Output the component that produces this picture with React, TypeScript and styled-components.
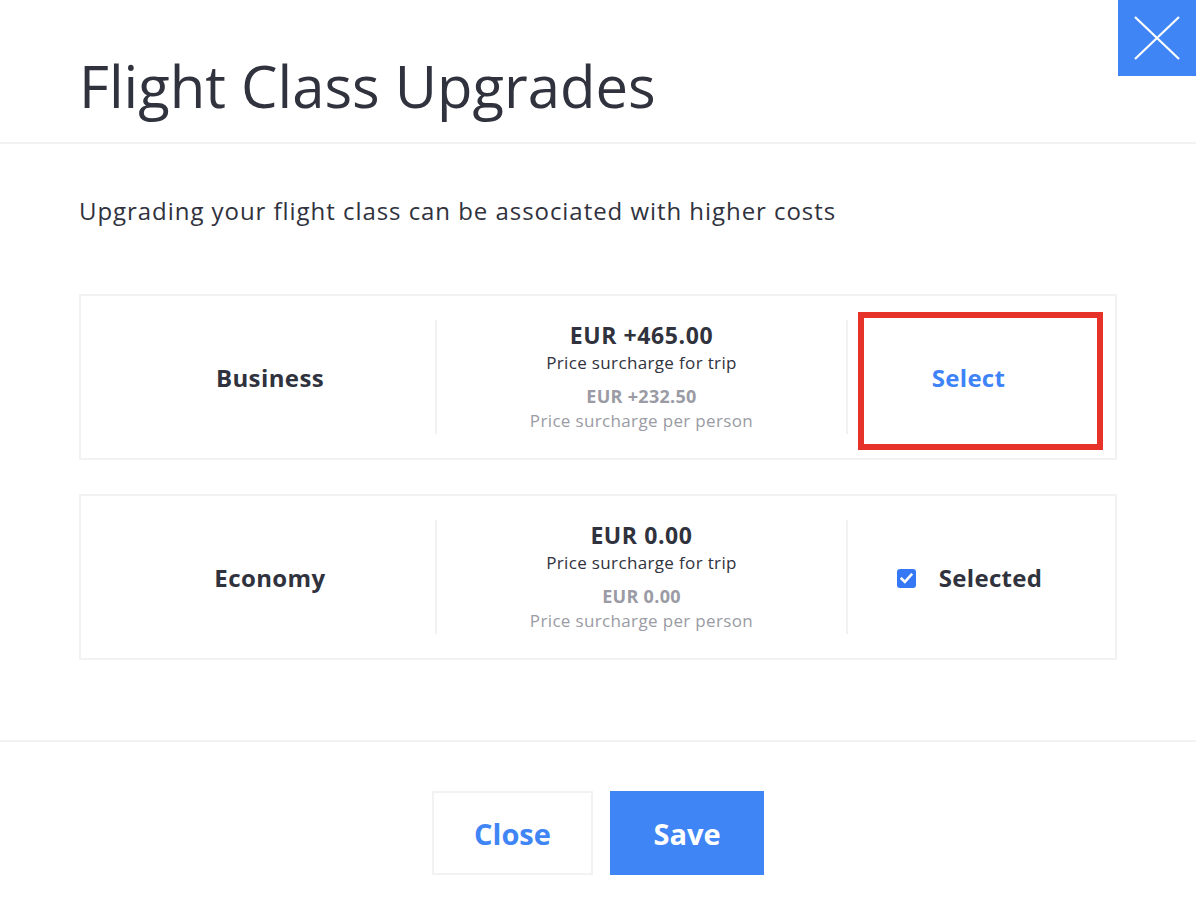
import React from "react";
import styled, { createGlobalStyle } from "styled-components";

const GlobalStyle = createGlobalStyle`
  html, body { margin: 0; padding: 0; background: #ffffff; }
  body { font-family: "Open Sans", "Noto Sans", sans-serif; color: #30323d; }
  * { box-sizing: border-box; }
`;

const Modal = styled.div`
  position: relative;
  width: 1196px;
  height: 920px;
  background: #fff;
  display: flex;
  flex-direction: column;
`;

const Header = styled.header`
  height: 144px;
  border-bottom: 2px solid #f2f2f3;
  padding: 48px 0 0 79px;
`;

const Title = styled.h1`
  margin: 0;
  font-size: 58px;
  font-weight: 400;
  line-height: 76px;
  color: #30323d;
`;

const CloseX = styled.button`
  position: absolute;
  top: 0;
  right: 0;
  width: 78px;
  height: 76px;
  border: none;
  padding: 0;
  background: #4085f6;
  display: flex;
  align-items: center;
  justify-content: center;
  cursor: pointer;
`;

const Body = styled.main`
  padding: 51px 79px 0 79px;
  height: 598px;
  border-bottom: 2px solid #f2f2f3;
`;

const Subtitle = styled.p`
  margin: 0 0 67px 0;
  font-size: 24px;
  line-height: 32px;
  letter-spacing: 0.95px;
  color: #30323d;
`;

const Options = styled.div`
  display: flex;
  flex-direction: column;
  gap: 34px;
`;

const Card = styled.div`
  height: 166px;
  border: 2px solid #f2f2f3;
  padding: 24px;
  display: grid;
  grid-template-columns: 330px 411px 1fr;
`;

const Cell = styled.div<{ $divider?: boolean }>`
  display: flex;
  flex-direction: column;
  align-items: center;
  justify-content: center;
  ${(p) => (p.$divider ? "border-left: 2px solid #f2f2f3;" : "")}
`;

const ClassName = styled.div`
  font-size: 24px;
  font-weight: 700;
  letter-spacing: 0.4px;
  color: #30323d;
`;

const Price = styled.div<{ $muted?: boolean }>`
  font-size: ${(p) => (p.$muted ? "18px" : "23px")};
  font-weight: 700;
  line-height: ${(p) => (p.$muted ? "24px" : "28px")};
  letter-spacing: ${(p) => (p.$muted ? "0.3px" : "0.6px")};
  color: ${(p) => (p.$muted ? "#9a9ba4" : "#30323d")};
  margin-top: ${(p) => (p.$muted ? "7px" : "0")};
`;

const PriceNote = styled.div<{ $muted?: boolean }>`
  font-size: 17px;
  line-height: ${(p) => (p.$muted ? "26px" : "28px")};
  letter-spacing: 0.35px;
  color: ${(p) => (p.$muted ? "#9a9ba4" : "#30323d")};
`;

const SelectButton = styled.button`
  flex: 1;
  align-self: stretch;
  margin: -8px -12px -16px 10px;
  border: 6px solid #e63228;
  background: #fff;
  padding: 0 24px 7px 0;
  font-family: inherit;
  font-size: 24px;
  font-weight: 700;
  letter-spacing: 0.3px;
  color: #3f83f8;
  cursor: pointer;
`;

const SelectedLabel = styled.label`
  display: flex;
  align-items: center;
  gap: 23px;
  font-size: 24px;
  font-weight: 700;
  letter-spacing: 0.3px;
  color: #30323d;
`;

const CheckBox = styled.span`
  flex: none;
  width: 19px;
  height: 19px;
  border-radius: 3px;
  background: #3478f6;
  display: inline-flex;
  align-items: center;
  justify-content: center;
  margin-top: 2px;
`;

const Footer = styled.footer`
  flex: 1;
  display: flex;
  justify-content: center;
  align-items: flex-start;
  padding-top: 49px;
  gap: 17px;
`;

const FooterButton = styled.button<{ $primary?: boolean }>`
  height: 84px;
  width: ${(p) => (p.$primary ? "154px" : "161px")};
  border: ${(p) => (p.$primary ? "none" : "2px solid #f2f2f3")};
  background: ${(p) => (p.$primary ? "#4085f6" : "#ffffff")};
  color: ${(p) => (p.$primary ? "#ffffff" : "#4085f6")};
  font-family: inherit;
  font-size: 29px;
  font-weight: 700;
  cursor: pointer;
`;

type Option = {
  name: string;
  trip: string;
  person: string;
  selected: boolean;
};

const options: Option[] = [
  { name: "Business", trip: "EUR +465.00", person: "EUR +232.50", selected: false },
  { name: "Economy", trip: "EUR 0.00", person: "EUR 0.00", selected: true },
];

export default function App() {
  return (
    <>
      <GlobalStyle />
      <Modal>
        <Header>
          <Title>Flight Class Upgrades</Title>
        </Header>
        <CloseX aria-label="Close">
          <svg width="48" height="44" viewBox="0 0 48 44">
            <path d="M2 1 L46 43 M46 1 L2 43" stroke="#fff" strokeWidth="2.2" fill="none" />
          </svg>
        </CloseX>
        <Body>
          <Subtitle>Upgrading your flight class can be associated with higher costs</Subtitle>
          <Options>
            {options.map((o) => (
              <Card key={o.name}>
                <Cell>
                  <ClassName>{o.name}</ClassName>
                </Cell>
                <Cell $divider>
                  <Price>{o.trip}</Price>
                  <PriceNote>Price surcharge for trip</PriceNote>
                  <Price $muted>{o.person}</Price>
                  <PriceNote $muted>Price surcharge per person</PriceNote>
                </Cell>
                <Cell $divider>
                  {o.selected ? (
                    <SelectedLabel>
                      <CheckBox>
                        <svg width="13" height="11" viewBox="0 0 12 10">
                          <path d="M1.5 5.2 L4.5 8.2 L10.5 1.5" stroke="#fff" strokeWidth="2.4" fill="none" strokeLinecap="square" />
                        </svg>
                      </CheckBox>
                      Selected
                    </SelectedLabel>
                  ) : (
                    <SelectButton>Select</SelectButton>
                  )}
                </Cell>
              </Card>
            ))}
          </Options>
        </Body>
        <Footer>
          <FooterButton>Close</FooterButton>
          <FooterButton $primary>Save</FooterButton>
        </Footer>
      </Modal>
    </>
  );
}
